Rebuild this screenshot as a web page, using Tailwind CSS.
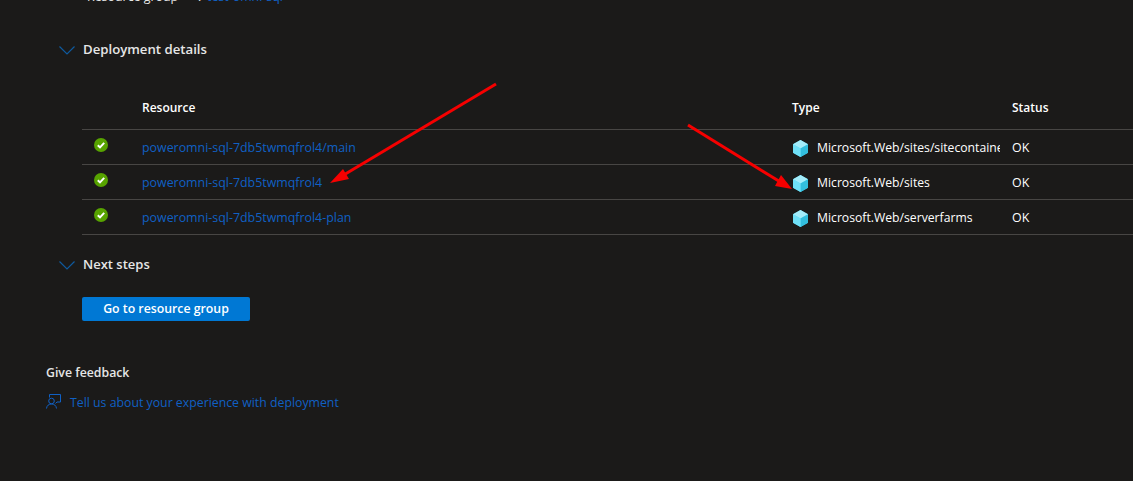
<!DOCTYPE html>
<html lang="en">
<head>
    <meta charset="UTF-8">
    <script src="https://cdn.jsdelivr.net/npm/@tailwindcss/browser@4"></script>
    <title>Deployment overview</title>
</head>
<body class="bg-[#1b1a19] h-[481px] overflow-hidden relative font-['Open_Sans',sans-serif] text-[12.4px] text-white">

    <svg width="0" height="0" class="absolute">
        <defs>
            <g id="cube">
                <polygon points="8,0 16,4.5 16,13.5 8,18 0,13.5 0,4.5" fill="#50d4f2"/>
                <polygon points="8,0 16,4.5 8,9 0,4.5" fill="#a3ecfa"/>
                <polygon points="8,9 16,4.5 16,13.5 8,18" fill="#32bedd"/>
                <polygon points="0,4.5 8,9 8,18 0,13.5" fill="#6fe0f7"/>
            </g>
            <g id="ok">
                <circle cx="7" cy="7" r="7" fill="#57a300"/>
                <path d="M3.8 7.2 L6 9.4 L10.2 4.9" fill="none" stroke="#fff" stroke-width="2"/>
            </g>
        </defs>
    </svg>

    <!-- Essentials row, cut off by the top edge -->
    <div class="h-[6px] overflow-hidden relative">
        <div class="flex -mt-[12px] ml-[87px] leading-[18px]">
            <span class="w-[111px] text-[#e6e6e6]">Resource group</span>
            <span class="w-[9px] text-[#e6e6e6]">:</span>
            <span class="text-[#1060c4]">test-omni-sql</span>
        </div>
    </div>

    <!-- Deployment details -->
    <div class="flex items-center ml-[59px] mt-[35px] h-[18px]">
        <svg width="16" height="9" viewBox="0 0 16 9" class="mr-[8px]"><path d="M0.5 0.5 L8 8 L15.5 0.5" fill="none" stroke="#0f5a9e" stroke-width="1.2"/></svg>
        <span class="font-semibold text-[13.2px] text-[#e6e6e6]">Deployment details</span>
    </div>

    <!-- Table -->
    <div class="ml-[82px] mt-[38px]">
        <div class="flex h-[21px] items-center font-semibold text-[12px]">
            <div class="w-[60px]"></div>
            <div class="w-[650px]">Resource</div>
            <div class="w-[220px]">Type</div>
            <div>Status</div>
        </div>
        <div class="mt-[11px] border-t border-[#484644]">
            <div class="flex h-[35px] items-center border-b border-[#484644]">
                <div class="w-[60px] pl-[12px] pb-[4px]"><svg width="14" height="14"><use href="#ok"/></svg></div>
                <a class="w-[650px] pt-[2px] text-[#1060c4]">poweromni-sql-7db5twmqfrol4/main</a>
                <div class="w-[25px] pt-[3px] pl-[1px]"><svg width="15" height="17" viewBox="0 0 16 18"><use href="#cube"/></svg></div>
                <div class="w-[183px] mr-[12px] pt-[2px] overflow-hidden whitespace-nowrap text-[12.2px]">Microsoft.Web/sites/sitecontainers</div>
                <div class="pt-[2px]">OK</div>
            </div>
            <div class="flex h-[35px] items-center border-b border-[#484644]">
                <div class="w-[60px] pl-[12px] pb-[4px]"><svg width="14" height="14"><use href="#ok"/></svg></div>
                <a class="w-[650px] pt-[2px] text-[#1060c4]">poweromni-sql-7db5twmqfrol4</a>
                <div class="w-[25px] pt-[3px] pl-[1px]"><svg width="15" height="17" viewBox="0 0 16 18"><use href="#cube"/></svg></div>
                <div class="w-[183px] mr-[12px] pt-[2px] overflow-hidden whitespace-nowrap text-[12.2px]">Microsoft.Web/sites</div>
                <div class="pt-[2px]">OK</div>
            </div>
            <div class="flex h-[35px] items-center border-b border-[#484644]">
                <div class="w-[60px] pl-[12px] pb-[4px]"><svg width="14" height="14"><use href="#ok"/></svg></div>
                <a class="w-[650px] pt-[2px] text-[#1060c4]">poweromni-sql-7db5twmqfrol4-plan</a>
                <div class="w-[25px] pt-[3px] pl-[1px]"><svg width="15" height="17" viewBox="0 0 16 18"><use href="#cube"/></svg></div>
                <div class="w-[183px] mr-[12px] pt-[2px] overflow-hidden whitespace-nowrap text-[12.2px]">Microsoft.Web/serverfarms</div>
                <div class="pt-[2px]">OK</div>
            </div>
        </div>
    </div>

    <!-- Next steps -->
    <div class="flex items-center ml-[59px] mt-[21px] h-[18px]">
        <svg width="16" height="9" viewBox="0 0 16 9" class="mr-[8px]"><path d="M0.5 0.5 L8 8 L15.5 0.5" fill="none" stroke="#0f5a9e" stroke-width="1.2"/></svg>
        <span class="font-semibold text-[13px] text-[#e6e6e6]">Next steps</span>
    </div>
    <button class="block ml-[82px] mt-[23px] w-[168px] h-[24px] bg-[#0078d4] rounded-[2px] font-semibold text-[12.3px] text-white">Go to resource group</button>

    <!-- Feedback -->
    <div class="ml-[46px] mt-[43px] h-[18px] leading-[18px] font-semibold text-[12.3px] text-[#e6e6e6]">Give feedback</div>
    <div class="flex items-center ml-[46px] mt-[12px] h-[18px]">
        <svg width="15" height="15" viewBox="0 0 15 15" class="mr-[9px] -mt-[3px]" fill="none" stroke="#1060c4" stroke-width="1">
            <path d="M3.5 3.5 V0.5 H14.5 V8 H11 L9.5 9.5"/>
            <circle cx="5.5" cy="7" r="2.8"/>
            <path d="M0.5 14.5 C0.8 11.5 2.8 10 5.5 10 C8.2 10 10.2 11.5 10.5 14.5"/>
        </svg>
        <a class="text-[12.3px] text-[#1060c4]">Tell us about your experience with deployment</a>
    </div>

    <!-- Red annotation arrows drawn over the screenshot -->
    <svg class="absolute left-0 top-0 pointer-events-none" width="1133" height="481" viewBox="0 0 1133 481">
        <path d="M496 84 L342 176" stroke="#f60000" stroke-width="3" fill="none"/>
        <polygon points="330,183 343,169 349,179" fill="#f60000"/>
        <path d="M688 125 L782 183" stroke="#f60000" stroke-width="3" fill="none"/>
        <polygon points="792,189 775,186 781,175" fill="#f60000"/>
    </svg>
</body>
</html>
